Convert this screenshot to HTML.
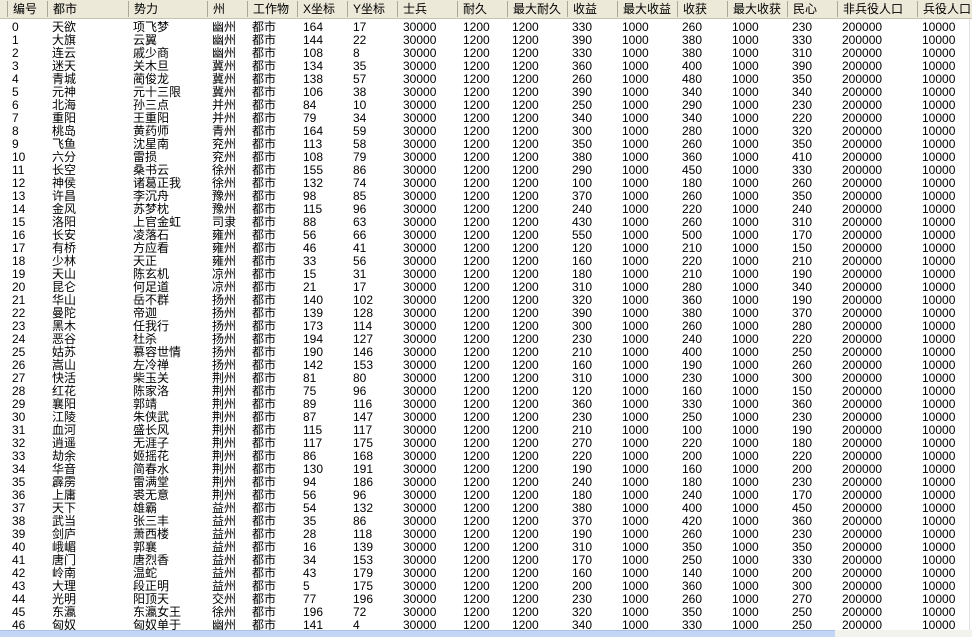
<!DOCTYPE html>
<html><head><meta charset="utf-8">
<style>
html,body{margin:0;padding:0;background:#fff;width:972px;height:637px;overflow:hidden}
body{font-family:"Liberation Sans","WenQuanYi Zen Hei","Noto Sans CJK SC",sans-serif;font-size:12px;color:#000;position:relative}
.hd{position:absolute;left:0;top:0;width:972px;height:18px;background:#ece9d8;border-bottom:1px solid #c5c2b2;}
.hd span{position:absolute;top:1px;line-height:16px;padding-left:5px;border-left:1px solid #aca899;height:16px}
.r{position:absolute;left:0;height:13px;line-height:13px;width:972px;white-space:nowrap}
.r span{position:absolute;top:2px}
.c0{left:12px}.c1{left:52px}.c2{left:133px}.c3{left:212px}.c4{left:252px}.c5{left:303px}.c6{left:353px}.c7{left:403px}.c8{left:463px}.c9{left:512px}.c10{left:572px}.c11{left:622px}.c12{left:682px}.c13{left:732px}.c14{left:792px}.c15{left:842px}.c16{left:922px}
.sb{position:absolute;left:0;top:630px;width:972px;height:7px;background:#f3f3ee}
.th{position:absolute;left:0;top:630px;width:835px;height:7px;background:#c4d6f7;border-top:1px solid #a9c0ea;box-sizing:border-box}
.vl{position:absolute;left:969px;top:19px;width:1px;height:611px;background:#e0e0e0}
</style></head><body>
<div class="hd">
<span style="left:7px">编号</span><span style="left:47px">都市</span><span style="left:128px">势力</span><span style="left:207px">州</span><span style="left:247px">工作物</span><span style="left:297px">X坐标</span><span style="left:347px">Y坐标</span><span style="left:397px">士兵</span><span style="left:457px">耐久</span><span style="left:507px">最大耐久</span><span style="left:567px">收益</span><span style="left:617px">最大收益</span><span style="left:677px">收获</span><span style="left:727px">最大收获</span><span style="left:787px">民心</span><span style="left:837px">非兵役人口</span><span style="left:917px">兵役人口</span>
</div>
<div class="vl"></div>
<div class="r" style="top:19px"><span class="c0">0</span><span class="c1">天欲</span><span class="c2">项飞梦</span><span class="c3">幽州</span><span class="c4">都市</span><span class="c5">164</span><span class="c6">17</span><span class="c7">30000</span><span class="c8">1200</span><span class="c9">1200</span><span class="c10">330</span><span class="c11">1000</span><span class="c12">260</span><span class="c13">1000</span><span class="c14">230</span><span class="c15">200000</span><span class="c16">10000</span></div>
<div class="r" style="top:32px"><span class="c0">1</span><span class="c1">大旗</span><span class="c2">云翼</span><span class="c3">幽州</span><span class="c4">都市</span><span class="c5">144</span><span class="c6">22</span><span class="c7">30000</span><span class="c8">1200</span><span class="c9">1200</span><span class="c10">390</span><span class="c11">1000</span><span class="c12">380</span><span class="c13">1000</span><span class="c14">330</span><span class="c15">200000</span><span class="c16">10000</span></div>
<div class="r" style="top:45px"><span class="c0">2</span><span class="c1">连云</span><span class="c2">戚少商</span><span class="c3">幽州</span><span class="c4">都市</span><span class="c5">108</span><span class="c6">8</span><span class="c7">30000</span><span class="c8">1200</span><span class="c9">1200</span><span class="c10">330</span><span class="c11">1000</span><span class="c12">380</span><span class="c13">1000</span><span class="c14">310</span><span class="c15">200000</span><span class="c16">10000</span></div>
<div class="r" style="top:58px"><span class="c0">3</span><span class="c1">迷天</span><span class="c2">关木旦</span><span class="c3">冀州</span><span class="c4">都市</span><span class="c5">134</span><span class="c6">35</span><span class="c7">30000</span><span class="c8">1200</span><span class="c9">1200</span><span class="c10">360</span><span class="c11">1000</span><span class="c12">400</span><span class="c13">1000</span><span class="c14">390</span><span class="c15">200000</span><span class="c16">10000</span></div>
<div class="r" style="top:71px"><span class="c0">4</span><span class="c1">青城</span><span class="c2">蔺俊龙</span><span class="c3">冀州</span><span class="c4">都市</span><span class="c5">138</span><span class="c6">57</span><span class="c7">30000</span><span class="c8">1200</span><span class="c9">1200</span><span class="c10">260</span><span class="c11">1000</span><span class="c12">480</span><span class="c13">1000</span><span class="c14">350</span><span class="c15">200000</span><span class="c16">10000</span></div>
<div class="r" style="top:84px"><span class="c0">5</span><span class="c1">元神</span><span class="c2">元十三限</span><span class="c3">冀州</span><span class="c4">都市</span><span class="c5">106</span><span class="c6">38</span><span class="c7">30000</span><span class="c8">1200</span><span class="c9">1200</span><span class="c10">390</span><span class="c11">1000</span><span class="c12">340</span><span class="c13">1000</span><span class="c14">340</span><span class="c15">200000</span><span class="c16">10000</span></div>
<div class="r" style="top:97px"><span class="c0">6</span><span class="c1">北海</span><span class="c2">孙三点</span><span class="c3">并州</span><span class="c4">都市</span><span class="c5">84</span><span class="c6">10</span><span class="c7">30000</span><span class="c8">1200</span><span class="c9">1200</span><span class="c10">250</span><span class="c11">1000</span><span class="c12">290</span><span class="c13">1000</span><span class="c14">230</span><span class="c15">200000</span><span class="c16">10000</span></div>
<div class="r" style="top:110px"><span class="c0">7</span><span class="c1">重阳</span><span class="c2">王重阳</span><span class="c3">并州</span><span class="c4">都市</span><span class="c5">79</span><span class="c6">34</span><span class="c7">30000</span><span class="c8">1200</span><span class="c9">1200</span><span class="c10">340</span><span class="c11">1000</span><span class="c12">340</span><span class="c13">1000</span><span class="c14">220</span><span class="c15">200000</span><span class="c16">10000</span></div>
<div class="r" style="top:123px"><span class="c0">8</span><span class="c1">桃岛</span><span class="c2">黄药师</span><span class="c3">青州</span><span class="c4">都市</span><span class="c5">164</span><span class="c6">59</span><span class="c7">30000</span><span class="c8">1200</span><span class="c9">1200</span><span class="c10">300</span><span class="c11">1000</span><span class="c12">280</span><span class="c13">1000</span><span class="c14">320</span><span class="c15">200000</span><span class="c16">10000</span></div>
<div class="r" style="top:136px"><span class="c0">9</span><span class="c1">飞鱼</span><span class="c2">沈星南</span><span class="c3">兖州</span><span class="c4">都市</span><span class="c5">113</span><span class="c6">58</span><span class="c7">30000</span><span class="c8">1200</span><span class="c9">1200</span><span class="c10">350</span><span class="c11">1000</span><span class="c12">260</span><span class="c13">1000</span><span class="c14">350</span><span class="c15">200000</span><span class="c16">10000</span></div>
<div class="r" style="top:149px"><span class="c0">10</span><span class="c1">六分</span><span class="c2">雷损</span><span class="c3">兖州</span><span class="c4">都市</span><span class="c5">108</span><span class="c6">79</span><span class="c7">30000</span><span class="c8">1200</span><span class="c9">1200</span><span class="c10">380</span><span class="c11">1000</span><span class="c12">360</span><span class="c13">1000</span><span class="c14">410</span><span class="c15">200000</span><span class="c16">10000</span></div>
<div class="r" style="top:162px"><span class="c0">11</span><span class="c1">长空</span><span class="c2">桑书云</span><span class="c3">徐州</span><span class="c4">都市</span><span class="c5">155</span><span class="c6">86</span><span class="c7">30000</span><span class="c8">1200</span><span class="c9">1200</span><span class="c10">290</span><span class="c11">1000</span><span class="c12">450</span><span class="c13">1000</span><span class="c14">330</span><span class="c15">200000</span><span class="c16">10000</span></div>
<div class="r" style="top:175px"><span class="c0">12</span><span class="c1">神侯</span><span class="c2">诸葛正我</span><span class="c3">徐州</span><span class="c4">都市</span><span class="c5">132</span><span class="c6">74</span><span class="c7">30000</span><span class="c8">1200</span><span class="c9">1200</span><span class="c10">100</span><span class="c11">1000</span><span class="c12">180</span><span class="c13">1000</span><span class="c14">260</span><span class="c15">200000</span><span class="c16">10000</span></div>
<div class="r" style="top:188px"><span class="c0">13</span><span class="c1">许昌</span><span class="c2">李沉舟</span><span class="c3">豫州</span><span class="c4">都市</span><span class="c5">98</span><span class="c6">85</span><span class="c7">30000</span><span class="c8">1200</span><span class="c9">1200</span><span class="c10">370</span><span class="c11">1000</span><span class="c12">260</span><span class="c13">1000</span><span class="c14">350</span><span class="c15">200000</span><span class="c16">10000</span></div>
<div class="r" style="top:201px"><span class="c0">14</span><span class="c1">金风</span><span class="c2">苏梦枕</span><span class="c3">豫州</span><span class="c4">都市</span><span class="c5">115</span><span class="c6">96</span><span class="c7">30000</span><span class="c8">1200</span><span class="c9">1200</span><span class="c10">240</span><span class="c11">1000</span><span class="c12">220</span><span class="c13">1000</span><span class="c14">240</span><span class="c15">200000</span><span class="c16">10000</span></div>
<div class="r" style="top:214px"><span class="c0">15</span><span class="c1">洛阳</span><span class="c2">上官金虹</span><span class="c3">司隶</span><span class="c4">都市</span><span class="c5">88</span><span class="c6">63</span><span class="c7">30000</span><span class="c8">1200</span><span class="c9">1200</span><span class="c10">430</span><span class="c11">1000</span><span class="c12">260</span><span class="c13">1000</span><span class="c14">310</span><span class="c15">200000</span><span class="c16">10000</span></div>
<div class="r" style="top:227px"><span class="c0">16</span><span class="c1">长安</span><span class="c2">凌落石</span><span class="c3">雍州</span><span class="c4">都市</span><span class="c5">56</span><span class="c6">66</span><span class="c7">30000</span><span class="c8">1200</span><span class="c9">1200</span><span class="c10">550</span><span class="c11">1000</span><span class="c12">500</span><span class="c13">1000</span><span class="c14">170</span><span class="c15">200000</span><span class="c16">10000</span></div>
<div class="r" style="top:240px"><span class="c0">17</span><span class="c1">有桥</span><span class="c2">方应看</span><span class="c3">雍州</span><span class="c4">都市</span><span class="c5">46</span><span class="c6">41</span><span class="c7">30000</span><span class="c8">1200</span><span class="c9">1200</span><span class="c10">120</span><span class="c11">1000</span><span class="c12">210</span><span class="c13">1000</span><span class="c14">150</span><span class="c15">200000</span><span class="c16">10000</span></div>
<div class="r" style="top:253px"><span class="c0">18</span><span class="c1">少林</span><span class="c2">天正</span><span class="c3">雍州</span><span class="c4">都市</span><span class="c5">33</span><span class="c6">56</span><span class="c7">30000</span><span class="c8">1200</span><span class="c9">1200</span><span class="c10">160</span><span class="c11">1000</span><span class="c12">220</span><span class="c13">1000</span><span class="c14">210</span><span class="c15">200000</span><span class="c16">10000</span></div>
<div class="r" style="top:266px"><span class="c0">19</span><span class="c1">天山</span><span class="c2">陈玄机</span><span class="c3">凉州</span><span class="c4">都市</span><span class="c5">15</span><span class="c6">31</span><span class="c7">30000</span><span class="c8">1200</span><span class="c9">1200</span><span class="c10">180</span><span class="c11">1000</span><span class="c12">210</span><span class="c13">1000</span><span class="c14">190</span><span class="c15">200000</span><span class="c16">10000</span></div>
<div class="r" style="top:279px"><span class="c0">20</span><span class="c1">昆仑</span><span class="c2">何足道</span><span class="c3">凉州</span><span class="c4">都市</span><span class="c5">21</span><span class="c6">17</span><span class="c7">30000</span><span class="c8">1200</span><span class="c9">1200</span><span class="c10">310</span><span class="c11">1000</span><span class="c12">280</span><span class="c13">1000</span><span class="c14">340</span><span class="c15">200000</span><span class="c16">10000</span></div>
<div class="r" style="top:292px"><span class="c0">21</span><span class="c1">华山</span><span class="c2">岳不群</span><span class="c3">扬州</span><span class="c4">都市</span><span class="c5">140</span><span class="c6">102</span><span class="c7">30000</span><span class="c8">1200</span><span class="c9">1200</span><span class="c10">320</span><span class="c11">1000</span><span class="c12">360</span><span class="c13">1000</span><span class="c14">190</span><span class="c15">200000</span><span class="c16">10000</span></div>
<div class="r" style="top:305px"><span class="c0">22</span><span class="c1">曼陀</span><span class="c2">帝迦</span><span class="c3">扬州</span><span class="c4">都市</span><span class="c5">139</span><span class="c6">128</span><span class="c7">30000</span><span class="c8">1200</span><span class="c9">1200</span><span class="c10">390</span><span class="c11">1000</span><span class="c12">380</span><span class="c13">1000</span><span class="c14">370</span><span class="c15">200000</span><span class="c16">10000</span></div>
<div class="r" style="top:318px"><span class="c0">23</span><span class="c1">黑木</span><span class="c2">任我行</span><span class="c3">扬州</span><span class="c4">都市</span><span class="c5">173</span><span class="c6">114</span><span class="c7">30000</span><span class="c8">1200</span><span class="c9">1200</span><span class="c10">300</span><span class="c11">1000</span><span class="c12">260</span><span class="c13">1000</span><span class="c14">280</span><span class="c15">200000</span><span class="c16">10000</span></div>
<div class="r" style="top:331px"><span class="c0">24</span><span class="c1">恶谷</span><span class="c2">杜杀</span><span class="c3">扬州</span><span class="c4">都市</span><span class="c5">194</span><span class="c6">127</span><span class="c7">30000</span><span class="c8">1200</span><span class="c9">1200</span><span class="c10">230</span><span class="c11">1000</span><span class="c12">240</span><span class="c13">1000</span><span class="c14">220</span><span class="c15">200000</span><span class="c16">10000</span></div>
<div class="r" style="top:344px"><span class="c0">25</span><span class="c1">姑苏</span><span class="c2">慕容世情</span><span class="c3">扬州</span><span class="c4">都市</span><span class="c5">190</span><span class="c6">146</span><span class="c7">30000</span><span class="c8">1200</span><span class="c9">1200</span><span class="c10">210</span><span class="c11">1000</span><span class="c12">400</span><span class="c13">1000</span><span class="c14">250</span><span class="c15">200000</span><span class="c16">10000</span></div>
<div class="r" style="top:357px"><span class="c0">26</span><span class="c1">嵩山</span><span class="c2">左冷禅</span><span class="c3">扬州</span><span class="c4">都市</span><span class="c5">142</span><span class="c6">153</span><span class="c7">30000</span><span class="c8">1200</span><span class="c9">1200</span><span class="c10">160</span><span class="c11">1000</span><span class="c12">190</span><span class="c13">1000</span><span class="c14">260</span><span class="c15">200000</span><span class="c16">10000</span></div>
<div class="r" style="top:370px"><span class="c0">27</span><span class="c1">快活</span><span class="c2">柴玉关</span><span class="c3">荆州</span><span class="c4">都市</span><span class="c5">81</span><span class="c6">80</span><span class="c7">30000</span><span class="c8">1200</span><span class="c9">1200</span><span class="c10">310</span><span class="c11">1000</span><span class="c12">230</span><span class="c13">1000</span><span class="c14">300</span><span class="c15">200000</span><span class="c16">10000</span></div>
<div class="r" style="top:383px"><span class="c0">28</span><span class="c1">红花</span><span class="c2">陈家洛</span><span class="c3">荆州</span><span class="c4">都市</span><span class="c5">75</span><span class="c6">96</span><span class="c7">30000</span><span class="c8">1200</span><span class="c9">1200</span><span class="c10">120</span><span class="c11">1000</span><span class="c12">160</span><span class="c13">1000</span><span class="c14">150</span><span class="c15">200000</span><span class="c16">10000</span></div>
<div class="r" style="top:396px"><span class="c0">29</span><span class="c1">襄阳</span><span class="c2">郭靖</span><span class="c3">荆州</span><span class="c4">都市</span><span class="c5">89</span><span class="c6">116</span><span class="c7">30000</span><span class="c8">1200</span><span class="c9">1200</span><span class="c10">360</span><span class="c11">1000</span><span class="c12">330</span><span class="c13">1000</span><span class="c14">360</span><span class="c15">200000</span><span class="c16">10000</span></div>
<div class="r" style="top:409px"><span class="c0">30</span><span class="c1">江陵</span><span class="c2">朱侠武</span><span class="c3">荆州</span><span class="c4">都市</span><span class="c5">87</span><span class="c6">147</span><span class="c7">30000</span><span class="c8">1200</span><span class="c9">1200</span><span class="c10">230</span><span class="c11">1000</span><span class="c12">250</span><span class="c13">1000</span><span class="c14">230</span><span class="c15">200000</span><span class="c16">10000</span></div>
<div class="r" style="top:422px"><span class="c0">31</span><span class="c1">血河</span><span class="c2">盛长风</span><span class="c3">荆州</span><span class="c4">都市</span><span class="c5">115</span><span class="c6">117</span><span class="c7">30000</span><span class="c8">1200</span><span class="c9">1200</span><span class="c10">210</span><span class="c11">1000</span><span class="c12">100</span><span class="c13">1000</span><span class="c14">190</span><span class="c15">200000</span><span class="c16">10000</span></div>
<div class="r" style="top:435px"><span class="c0">32</span><span class="c1">逍遥</span><span class="c2">无涯子</span><span class="c3">荆州</span><span class="c4">都市</span><span class="c5">117</span><span class="c6">175</span><span class="c7">30000</span><span class="c8">1200</span><span class="c9">1200</span><span class="c10">270</span><span class="c11">1000</span><span class="c12">220</span><span class="c13">1000</span><span class="c14">180</span><span class="c15">200000</span><span class="c16">10000</span></div>
<div class="r" style="top:448px"><span class="c0">33</span><span class="c1">劫余</span><span class="c2">姬摇花</span><span class="c3">荆州</span><span class="c4">都市</span><span class="c5">86</span><span class="c6">168</span><span class="c7">30000</span><span class="c8">1200</span><span class="c9">1200</span><span class="c10">220</span><span class="c11">1000</span><span class="c12">200</span><span class="c13">1000</span><span class="c14">220</span><span class="c15">200000</span><span class="c16">10000</span></div>
<div class="r" style="top:461px"><span class="c0">34</span><span class="c1">华音</span><span class="c2">简春水</span><span class="c3">荆州</span><span class="c4">都市</span><span class="c5">130</span><span class="c6">191</span><span class="c7">30000</span><span class="c8">1200</span><span class="c9">1200</span><span class="c10">190</span><span class="c11">1000</span><span class="c12">160</span><span class="c13">1000</span><span class="c14">200</span><span class="c15">200000</span><span class="c16">10000</span></div>
<div class="r" style="top:474px"><span class="c0">35</span><span class="c1">霹雳</span><span class="c2">雷满堂</span><span class="c3">荆州</span><span class="c4">都市</span><span class="c5">94</span><span class="c6">186</span><span class="c7">30000</span><span class="c8">1200</span><span class="c9">1200</span><span class="c10">240</span><span class="c11">1000</span><span class="c12">180</span><span class="c13">1000</span><span class="c14">230</span><span class="c15">200000</span><span class="c16">10000</span></div>
<div class="r" style="top:487px"><span class="c0">36</span><span class="c1">上庸</span><span class="c2">裘无意</span><span class="c3">荆州</span><span class="c4">都市</span><span class="c5">56</span><span class="c6">96</span><span class="c7">30000</span><span class="c8">1200</span><span class="c9">1200</span><span class="c10">180</span><span class="c11">1000</span><span class="c12">240</span><span class="c13">1000</span><span class="c14">170</span><span class="c15">200000</span><span class="c16">10000</span></div>
<div class="r" style="top:500px"><span class="c0">37</span><span class="c1">天下</span><span class="c2">雄霸</span><span class="c3">益州</span><span class="c4">都市</span><span class="c5">54</span><span class="c6">132</span><span class="c7">30000</span><span class="c8">1200</span><span class="c9">1200</span><span class="c10">380</span><span class="c11">1000</span><span class="c12">400</span><span class="c13">1000</span><span class="c14">450</span><span class="c15">200000</span><span class="c16">10000</span></div>
<div class="r" style="top:513px"><span class="c0">38</span><span class="c1">武当</span><span class="c2">张三丰</span><span class="c3">益州</span><span class="c4">都市</span><span class="c5">35</span><span class="c6">86</span><span class="c7">30000</span><span class="c8">1200</span><span class="c9">1200</span><span class="c10">370</span><span class="c11">1000</span><span class="c12">420</span><span class="c13">1000</span><span class="c14">360</span><span class="c15">200000</span><span class="c16">10000</span></div>
<div class="r" style="top:526px"><span class="c0">39</span><span class="c1">剑庐</span><span class="c2">萧西楼</span><span class="c3">益州</span><span class="c4">都市</span><span class="c5">28</span><span class="c6">118</span><span class="c7">30000</span><span class="c8">1200</span><span class="c9">1200</span><span class="c10">190</span><span class="c11">1000</span><span class="c12">260</span><span class="c13">1000</span><span class="c14">230</span><span class="c15">200000</span><span class="c16">10000</span></div>
<div class="r" style="top:539px"><span class="c0">40</span><span class="c1">峨嵋</span><span class="c2">郭襄</span><span class="c3">益州</span><span class="c4">都市</span><span class="c5">16</span><span class="c6">139</span><span class="c7">30000</span><span class="c8">1200</span><span class="c9">1200</span><span class="c10">310</span><span class="c11">1000</span><span class="c12">350</span><span class="c13">1000</span><span class="c14">350</span><span class="c15">200000</span><span class="c16">10000</span></div>
<div class="r" style="top:552px"><span class="c0">41</span><span class="c1">唐门</span><span class="c2">唐烈香</span><span class="c3">益州</span><span class="c4">都市</span><span class="c5">34</span><span class="c6">153</span><span class="c7">30000</span><span class="c8">1200</span><span class="c9">1200</span><span class="c10">170</span><span class="c11">1000</span><span class="c12">250</span><span class="c13">1000</span><span class="c14">330</span><span class="c15">200000</span><span class="c16">10000</span></div>
<div class="r" style="top:565px"><span class="c0">42</span><span class="c1">岭南</span><span class="c2">温蛇</span><span class="c3">益州</span><span class="c4">都市</span><span class="c5">43</span><span class="c6">179</span><span class="c7">30000</span><span class="c8">1200</span><span class="c9">1200</span><span class="c10">160</span><span class="c11">1000</span><span class="c12">140</span><span class="c13">1000</span><span class="c14">200</span><span class="c15">200000</span><span class="c16">10000</span></div>
<div class="r" style="top:578px"><span class="c0">43</span><span class="c1">大理</span><span class="c2">段正明</span><span class="c3">益州</span><span class="c4">都市</span><span class="c5">5</span><span class="c6">175</span><span class="c7">30000</span><span class="c8">1200</span><span class="c9">1200</span><span class="c10">200</span><span class="c11">1000</span><span class="c12">360</span><span class="c13">1000</span><span class="c14">300</span><span class="c15">200000</span><span class="c16">10000</span></div>
<div class="r" style="top:591px"><span class="c0">44</span><span class="c1">光明</span><span class="c2">阳顶天</span><span class="c3">交州</span><span class="c4">都市</span><span class="c5">77</span><span class="c6">196</span><span class="c7">30000</span><span class="c8">1200</span><span class="c9">1200</span><span class="c10">230</span><span class="c11">1000</span><span class="c12">260</span><span class="c13">1000</span><span class="c14">270</span><span class="c15">200000</span><span class="c16">10000</span></div>
<div class="r" style="top:604px"><span class="c0">45</span><span class="c1">东瀛</span><span class="c2">东瀛女王</span><span class="c3">徐州</span><span class="c4">都市</span><span class="c5">196</span><span class="c6">72</span><span class="c7">30000</span><span class="c8">1200</span><span class="c9">1200</span><span class="c10">320</span><span class="c11">1000</span><span class="c12">350</span><span class="c13">1000</span><span class="c14">250</span><span class="c15">200000</span><span class="c16">10000</span></div>
<div class="r" style="top:617px"><span class="c0">46</span><span class="c1">匈奴</span><span class="c2">匈奴单于</span><span class="c3">幽州</span><span class="c4">都市</span><span class="c5">141</span><span class="c6">4</span><span class="c7">30000</span><span class="c8">1200</span><span class="c9">1200</span><span class="c10">340</span><span class="c11">1000</span><span class="c12">330</span><span class="c13">1000</span><span class="c14">250</span><span class="c15">200000</span><span class="c16">10000</span></div>
<div class="sb"></div><div class="th"></div>
</body></html>
